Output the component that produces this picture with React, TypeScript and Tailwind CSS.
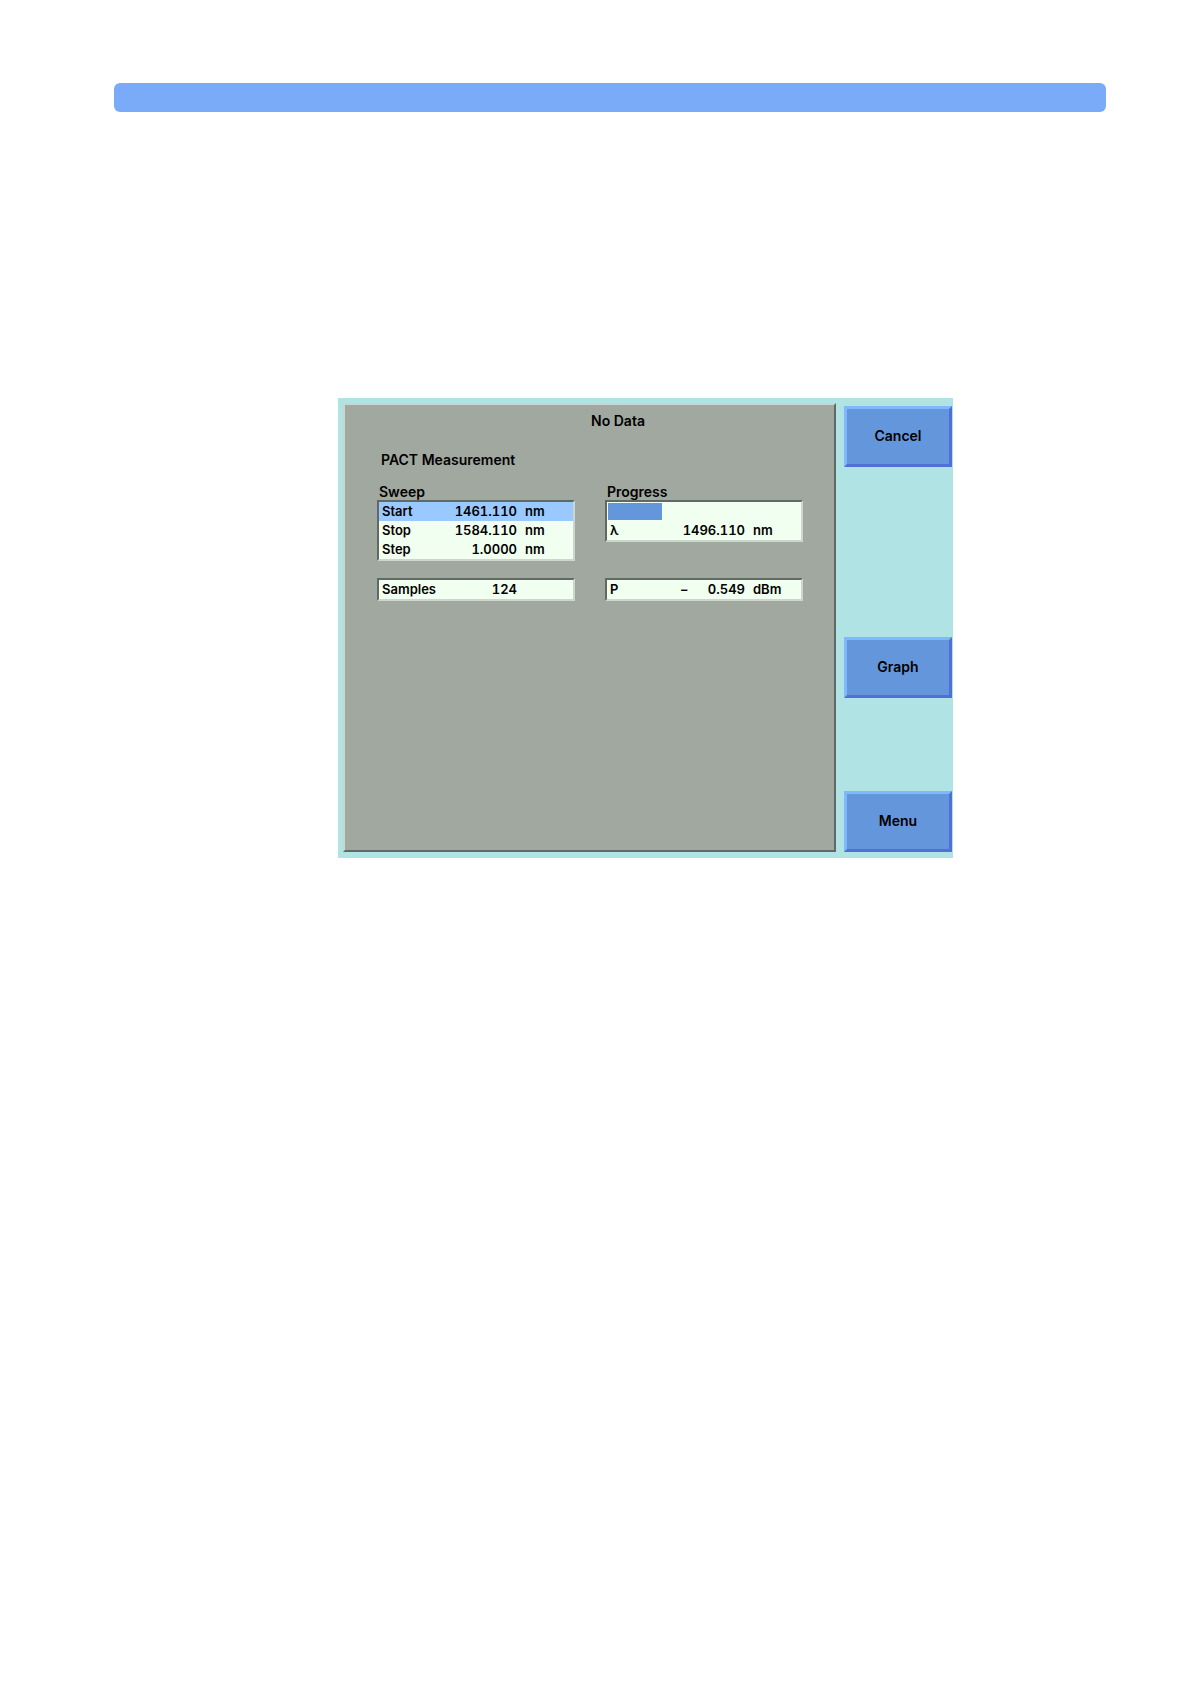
import type { ReactNode } from "react";

type Reading = {
  label: string;
  value: string;
  sign?: string;
  unit?: string;
  selected?: boolean;
};

const sweep: Reading[] = [
  { label: "Start", value: "1461.110", unit: "nm", selected: true },
  { label: "Stop", value: "1584.110", unit: "nm" },
  { label: "Step", value: "1.0000", unit: "nm" },
];

// six soft key slots, empty ones stay blank
const softKeys = ["Cancel", "", "", "Graph", "", "Menu"];

function Readings({ name, rows }: { name: string; rows: Reading[] }) {
  return (
    <table aria-label={name} className="w-full table-fixed border-collapse text-[13px]">
      <tbody>
        {rows.map((row) => (
          <tr key={row.label} className={row.selected ? "h-[19px] bg-[#99c9ff]" : "h-[19px]"}>
            <th scope="row" className="w-[67px] p-0 pl-[3px] text-left font-semibold">
              {row.label}
            </th>
            <td className="w-[71px] p-0">
              <div className="flex justify-end tabular-nums">
                {row.sign && <span className="mr-auto pl-[6px]">{row.sign}</span>}
                <span>{row.value}</span>
              </div>
            </td>
            <td className="p-0 pl-2">{row.unit}</td>
          </tr>
        ))}
      </tbody>
    </table>
  );
}

function Field({ children }: { children: ReactNode }) {
  return (
    <div className="border-2 border-t-[#5f6965] border-r-[#ccd6cc] border-b-[#ccd6cc] border-l-[#5f6965] bg-[#f0fff0]">
      {children}
    </div>
  );
}

function SoftKey({ label }: { label: string }) {
  return (
    <button
      type="button"
      className="h-[61px] border-3 border-t-[#7fb9fb] border-r-[#5070d4] border-b-[#5070d4] border-l-[#7fb9fb] bg-[#6496dc] pb-[2px] text-center font-semibold"
    >
      {label}
    </button>
  );
}

export default function App() {
  const progress = 28;

  return (
    <div className="min-h-screen bg-white pt-[83px] font-['Inter',sans-serif] text-[14px] leading-[19px] font-semibold text-black">
      <header className="mr-[84px] ml-[114px] h-[29px] rounded-md bg-[#7aabf9]" />

      <main className="mt-[286px] mr-[237px] ml-[338px] flex gap-2 bg-[#b0e4e4] pt-[5px] pr-[1px] pb-[6px] pl-[5px]">
        <section className="min-w-0 flex-1 border-2 border-t-[#ccd6cc] border-r-[#5f6965] border-b-[#5f6965] border-l-[#ccd6cc] bg-[#a0a8a0] pt-[6px] pr-[31px] pl-8">
          <p className="pl-14 text-center">No Data</p>
          <h1 className="mt-5 pl-1">PACT Measurement</h1>

          <div className="mt-[15px] grid grid-cols-2 gap-x-[30px]">
            <div>
              <h2 className="pl-[2px] leading-[16px]">Sweep</h2>
              <Field>
                <Readings name="Sweep" rows={sweep} />
              </Field>
            </div>
            <div>
              <h2 className="pl-[2px] leading-[16px]">Progress</h2>
              <Field>
                <div
                  role="progressbar"
                  aria-label="Progress"
                  aria-valuenow={progress}
                  className="mx-px mt-px mb-px h-[17px]"
                >
                  <div className="h-full bg-[#6496dc]" style={{ width: `${progress}%` }} />
                </div>
                <Readings name="Wavelength" rows={[{ label: "λ", value: "1496.110", unit: "nm" }]} />
              </Field>
            </div>
          </div>

          <div className="mt-[17px] grid grid-cols-2 gap-x-[30px]">
            <Field>
              <Readings name="Samples" rows={[{ label: "Samples", value: "124" }]} />
            </Field>
            <Field>
              <Readings name="Power" rows={[{ label: "P", sign: "−", value: "0.549", unit: "dBm" }]} />
            </Field>
          </div>
        </section>

        <nav aria-label="Soft keys" className="grid w-[108px] shrink-0 gap-4 pt-[3px]">
          {softKeys.map((label, i) =>
            label ? <SoftKey key={i} label={label} /> : <span key={i} className="h-[61px]" />
          )}
        </nav>
      </main>
    </div>
  );
}
